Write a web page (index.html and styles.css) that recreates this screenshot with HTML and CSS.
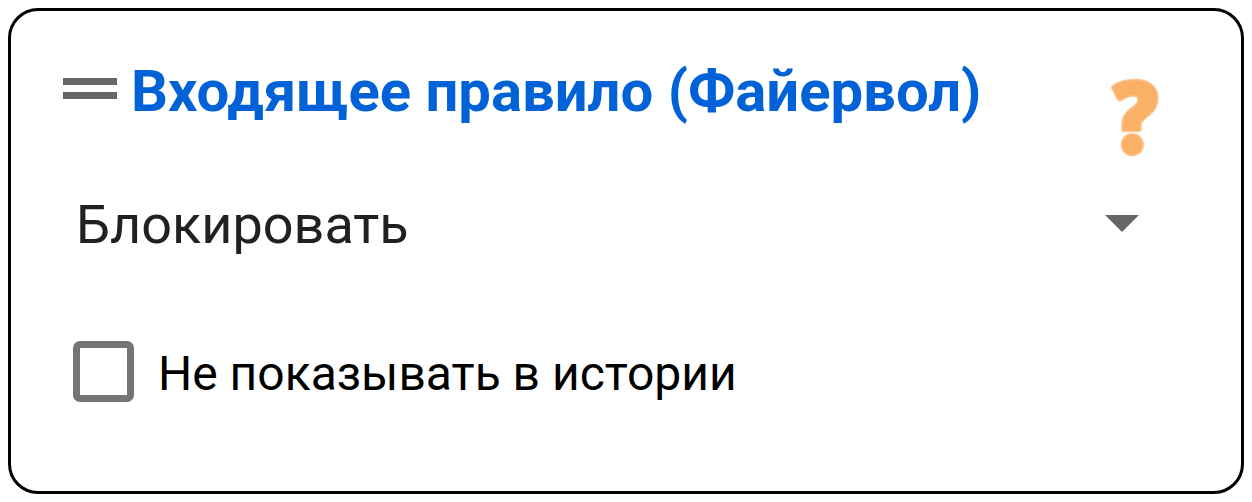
FILE: index.html
```html
<!DOCTYPE html>
<html lang="ru">
<head>
<meta charset="utf-8">
<meta name="viewport" content="width=device-width, initial-scale=1">
<title>Входящее правило</title>
<link rel="stylesheet" href="styles.css">
</head>
<body>
<main class="card">
  <header class="card-header">
    <svg class="handle" viewBox="0 0 54 22" aria-hidden="true"><path d="M0 0h54v7H0zM0 14h54v7H0z" fill="#666"/></svg>
    <h1 class="title">Входящее правило (Файервол)</h1>
    <button class="help" type="button" aria-label="Справка">
      <svg viewBox="0 0 48 79" aria-hidden="true"><g fill="#fbb067" stroke="#fcc591" stroke-width="1.5" stroke-linejoin="round"><path d="M2 7.500C8 3 16 1.500 24 1.500c14 0 23 7 23 19 0 7-3 12-9 17-5 4-8 6-8 9v5q0 2-2 2H13q-2 0-2-2V46c0-7 3-11 8-15 6-4 8-6 8-9s-2-4-5-4c-4 0-8 2-12 4.500q-2 1-3.500-1L1.200 11q-1-2 .8-3.500z"/><circle cx="21.300" cy="66.700" r="11"/></g></svg>
    </button>
  </header>
  <div class="select-row">
    <select class="select" aria-label="Действие"><option>Блокировать</option></select>
    <svg class="arrow" viewBox="0 0 34 17" aria-hidden="true"><path d="M0 0h34L17 17z" fill="#666"/></svg>
  </div>
  <label class="check-row">
    <input class="check" type="checkbox">
    <span>Не показывать в истории</span>
  </label>
</main>
</body>
</html>
```
FILE: styles.css
```css
* { box-sizing: border-box; }
body { margin: 0; padding: 8px; background: #fff; font-family: Roboto, sans-serif; }
.card { border: 3px solid #000; border-radius: 30px; padding: 44px 82px 84px 52px; }
.card-header { display: flex; align-items: flex-start; gap: 14px; }
.handle { width: 54px; height: 22px; margin-top: 23px; flex: none; }
.title { flex: 1; margin: 0; font-size: 58px; line-height: 72px; font-weight: 700; color: #0062d6; }
.help { flex: none; margin: 23px 0 0; padding: 0; border: 0; background: none; }
.help svg { display: block; width: 48px; height: 79px; }
.select-row { display: grid; align-items: center; margin-top: 32px; padding: 0 20px 0 13px; }
.select { grid-area: 1 / 1; width: 100%; height: 72px; padding: 0; border: 0; appearance: none; background: none; font: 400 54px/72px Roboto, sans-serif; color: #212121; }
.arrow { grid-area: 1 / 1; justify-self: end; width: 34px; height: 17px; margin-bottom: 4px; pointer-events: none; }
.check-row { display: flex; align-items: flex-start; gap: 24px; margin-top: 80px; padding-left: 10px; font-size: 48px; line-height: 66px; color: #000; }
.check { appearance: none; flex: none; width: 61px; height: 61px; margin: 0; border: 7px solid #757575; border-radius: 7px; }
.check:checked { background: #757575; }
```
